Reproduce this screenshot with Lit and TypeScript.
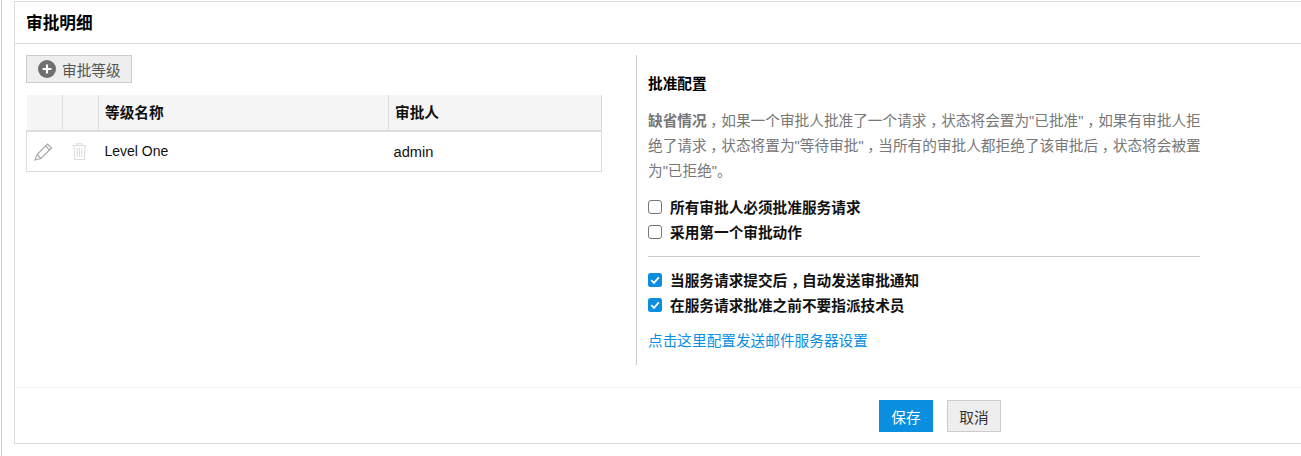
import { LitElement, html, css } from "lit";
import { customElement } from "lit/decorators.js";

const check = html`<svg viewBox="0 0 14 14" width="14" height="14"><rect width="14" height="14" rx="2.5" fill="#0a8fe0"/><path d="M3.2 7.2 6 9.9 10.8 4.4" fill="none" stroke="#fff" stroke-width="1.7"/></svg>`;
const empty = html`<svg viewBox="0 0 14 14" width="14" height="14"><rect x=".5" y=".5" width="13" height="13" rx="2.5" fill="#fff" stroke="#767676"/></svg>`;
const comma = html`<span class="c">，</span>`;

@customElement("app-root")
export class AppRoot extends LitElement {
  static styles = css`
    :host { display: block; width: 1301px; height: 456px; overflow: hidden; background: #fff; box-sizing: border-box;
      font-family: "Liberation Sans", "Noto Sans CJK SC", sans-serif; font-size: 14.67px; color: #111; }
    .page { margin-left: 1px; border-left: 1px solid #ccc; height: 456px; padding: 1px 0 0 12px; box-sizing: border-box; }
    .panel { width: 1300px; height: 443px; border: 1px solid #ddd; box-sizing: border-box; display: flex; flex-direction: column; }
    .title { height: 41px; border-bottom: 1px solid #ddd; padding-left: 11px; font-size: 16.67px; font-weight: 700; line-height: 43px; color: #000; box-sizing: content-box; }
    .body { height: 344px; display: flex; box-sizing: border-box; border-bottom: 1px solid #eee; }
    .left { width: 587px; padding: 11px 0 0 11px; box-sizing: content-box; }
    .add { width: 106px; height: 28px; box-sizing: border-box; background: #eee; border: 1px solid #ccc; display: flex; align-items: center; padding-left: 11px; gap: 6px; color: #555; }
    table { margin-top: 12px; width: 576px; border-collapse: collapse; table-layout: fixed; }
    th { height: 36px; background: #f5f5f5; text-align: left; font-weight: 700; padding: 0 0 2px 6px; border-bottom: 2px solid #ddd; border-left: 1px solid #ddd; color: #111; box-sizing: border-box; }
    th:first-child { border-left: none; }
    th:last-child { border-right: 1px solid #ddd; }
    td { height: 40px; padding: 0 0 0 6px; border-bottom: 1px solid #ddd; box-sizing: border-box; }
    td:first-child { border-left: 1px solid #ddd; padding: 0; }
    td:last-child { border-right: 1px solid #ddd; }
    td.icon { padding: 0; }
    td svg { display: block; }
    .pencil { margin-left: 7px; }
    .trash { margin-left: 9px; }
    .lvl { font-size: 14px; }
    .who { padding-top: 1px; padding-left: 5px; }
    .right { margin-left: 23px; margin-top: 11px; width: 564px; height: 310px; border-left: 1px solid #ccc; padding-left: 11px; box-sizing: content-box; }
    h4 { margin: 20px 0 0; font-size: 14.67px; font-weight: 700; line-height: 18px; color: #000; }
    .para { margin: 16px 0 0; line-height: 25px; color: #777; }
    .ln { white-space: nowrap; }
    .c { padding-left: .25em; letter-spacing: -.25em; }
    .group { display: flex; flex-direction: column; }
    .opt { display: flex; align-items: center; gap: 8px; height: 25px; font-weight: 700; color: #111; }
    .opt svg { flex: none; }
    .g1 { margin-top: 10px; }
    hr { width: 552px; margin: 12px 0 10px; border: none; border-top: 1px solid #ccc; }
    a { display: block; margin-top: 14px; color: #0a8fe0; line-height: 20px; }
    .foot { flex: 1; display: flex; align-items: flex-start; padding: 12px 0 0 864px; gap: 14px; }
    button { width: 54px; height: 32px; font: inherit; border: none; padding: 0; box-sizing: border-box; }
    .save { background: #0a8fe0; color: #fff; }
    .cancel { background: #eee; border: 1px solid #ccc; color: #333; }
  `;
  render() {
    return html`<div class="page"><div class="panel">
      <div class="title">审批明细</div>
      <div class="body">
        <div class="left">
          <div class="add">
            <svg width="18" height="18" viewBox="0 0 18 18"><circle cx="9" cy="9" r="9" fill="#6f6f6f"/><path d="M9 4.5v9M4.5 9h9" stroke="#fff" stroke-width="2.2"/></svg>
            审批等级
          </div>
          <table>
            <colgroup><col style="width:36px"/><col style="width:36px"/><col style="width:290px"/><col/></colgroup>
            <tr><th></th><th></th><th>等级名称</th><th>审批人</th></tr>
            <tr>
              <td class="icon"><svg class="pencil" width="19" height="19" viewBox="0 0 19 19" fill="none" stroke="#a8a8a8" stroke-width="1.1"><path d="M1 18 3 12.5 13.5 2 17.5 6 7 16.5Z"/><path d="M3 12.5 7 16.5M11.5 4l4 4"/></svg></td>
              <td class="icon"><svg class="trash" width="15" height="17" viewBox="0 0 15 17" fill="none" stroke="#ddd" stroke-width="1.1"><path d="M.5 2.5h14M5 2.5V.8h5v1.7M2 2.5l.7 14h9.6l.7-14M5.2 5v9M7.5 5v9M9.8 5v9"/></svg></td>
              <td class="lvl">Level One</td>
              <td class="who">admin</td>
            </tr>
          </table>
        </div>
        <div class="right">
          <h4>批准配置</h4>
          <div class="para">
            <div class="ln"><b>缺省情况</b>${comma}如果一个审批人批准了一个请求${comma}状态将会置为"已批准"${comma}如果有审批人拒</div>
            <div class="ln">绝了请求${comma}状态将置为"等待审批"${comma}当所有的审批人都拒绝了该审批后${comma}状态将会被置</div>
            <div class="ln">为"已拒绝"。</div>
          </div>
          <div class="group g1">
            <div class="opt">${empty}所有审批人必须批准服务请求</div>
            <div class="opt">${empty}采用第一个审批动作</div>
          </div>
          <hr/>
          <div class="group">
            <div class="opt">${check}<span>当服务请求提交后${comma}自动发送审批通知</span></div>
            <div class="opt">${check}在服务请求批准之前不要指派技术员</div>
          </div>
          <a>点击这里配置发送邮件服务器设置</a>
        </div>
      </div>
      <div class="foot"><button class="save">保存</button><button class="cancel">取消</button></div>
    </div></div>`;
  }
}
